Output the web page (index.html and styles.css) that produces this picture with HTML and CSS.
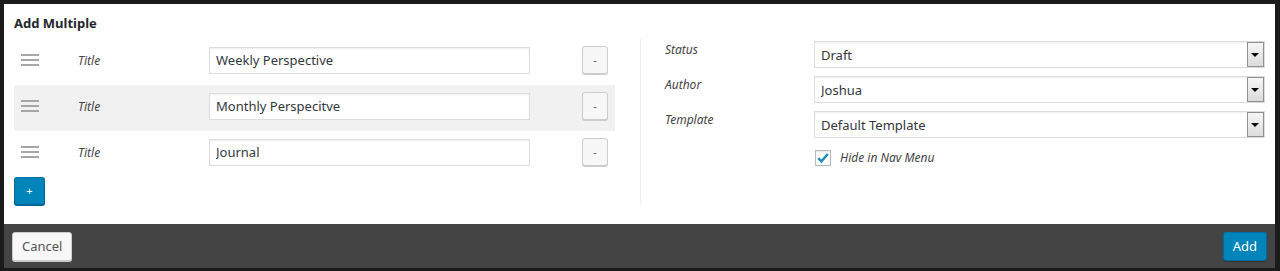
FILE: index.html
```html
<!DOCTYPE html>
<html lang="en">
<head>
    <meta charset="UTF-8">
    <meta name="viewport" content="width=device-width, initial-scale=1.0">
    <title>Add Multiple</title>
    <link rel="stylesheet" href="styles.css">
</head>
<body>
    <div class="modal">
        <div class="modal-body">
            <h1 class="modal-title">Add Multiple</h1>
            <div class="columns">
                <div class="rows-col">
                    <div class="item-row">
                        <span class="handle">
                            <svg width="18" height="12" viewBox="0 0 18 12"><rect y="0" width="18" height="2"/><rect y="5" width="18" height="2"/><rect y="10" width="18" height="2"/></svg>
                        </span>
                        <span class="item-label">Title</span>
                        <input class="text-input" type="text" value="Weekly Perspective">
                        <button class="button button-small">-</button>
                    </div>
                    <div class="item-row item-row-active">
                        <span class="handle">
                            <svg width="18" height="12" viewBox="0 0 18 12"><rect y="0" width="18" height="2"/><rect y="5" width="18" height="2"/><rect y="10" width="18" height="2"/></svg>
                        </span>
                        <span class="item-label">Title</span>
                        <input class="text-input" type="text" value="Monthly Perspecitve">
                        <button class="button button-small">-</button>
                    </div>
                    <div class="item-row">
                        <span class="handle">
                            <svg width="18" height="12" viewBox="0 0 18 12"><rect y="0" width="18" height="2"/><rect y="5" width="18" height="2"/><rect y="10" width="18" height="2"/></svg>
                        </span>
                        <span class="item-label">Title</span>
                        <input class="text-input" type="text" value="Journal">
                        <button class="button button-small">-</button>
                    </div>
                    <button class="button button-primary button-plus">+</button>
                </div>

                <div class="settings-col">
                    <div class="field">
                        <span class="field-label">Status</span>
                        <div class="select-wrap">
                            <select class="select"><option>Draft</option></select>
                        </div>
                    </div>
                    <div class="field">
                        <span class="field-label">Author</span>
                        <div class="select-wrap">
                            <select class="select"><option>Joshua</option></select>
                        </div>
                    </div>
                    <div class="field">
                        <span class="field-label">Template</span>
                        <div class="select-wrap">
                            <select class="select"><option>Default Template</option></select>
                        </div>
                    </div>
                    <div class="field field-check">
                        <span class="field-label"></span>
                        <label class="check">
                            <span class="checkbox">
                                <svg width="14" height="14" viewBox="0 0 14 14"><path d="M2.2 7.2 L5.4 10.4 L11.8 3" fill="none" stroke="#1e8cbe" stroke-width="2.4"/></svg>
                            </span>
                            <span class="check-text">Hide in Nav Menu</span>
                        </label>
                    </div>
                </div>
            </div>
        </div>

        <!-- Footer -->
        <div class="modal-footer">
            <button class="button button-footer">Cancel</button>
            <button class="button button-primary button-footer">Add</button>
        </div>
    </div>
</body>
</html>
```

FILE: styles.css
```css
body {
    margin: 0;
    padding: 4px 5px 3px 4px;
    background-color: #1b1b1b;
    font-family: 'Noto Sans', 'Open Sans', sans-serif;
    color: #32373c;
}
.modal {
    background-color: #fff;
}
.modal-body {
    padding: 10px 10px 19px 10px;
}
.modal-title {
    margin: 0 0 7px 0;
    font-size: 13px;
    line-height: 18px;
    font-weight: bold;
    color: #23282d;
}
.columns {
    display: flex;
}
.rows-col {
    width: 601px;
    margin-right: 25px;
}
.item-row {
    display: flex;
    align-items: center;
    padding: 7px 7px 11px 7px;
}
.item-row-active {
    background-color: #f1f1f1;
}
.handle {
    display: flex;
    width: 18px;
    margin-right: 39px;
}
.handle svg {
    fill: #a6a6a6;
}
.item-label {
    width: 131px;
    font-size: 12px;
    font-style: italic;
    color: #444;
}
.text-input {
    width: 321px;
    height: 27px;
    box-sizing: border-box;
    margin: 0;
    padding: 0 6px;
    border: 1px solid #ddd;
    box-shadow: inset 0 1px 2px rgba(0, 0, 0, 0.07);
    font-family: inherit;
    font-size: 13px;
    color: #32373c;
    background-color: #fff;
    outline: none;
}
.button {
    box-sizing: border-box;
    margin: 0;
    height: 28px;
    padding: 0 9px;
    border: 1px solid #ccc;
    border-radius: 3px;
    background-color: #f7f7f7;
    box-shadow: 0 1px 0 #ccc;
    font-family: inherit;
    font-size: 13px;
    line-height: 26px;
    color: #555;
    cursor: pointer;
}
.button-small {
    width: 26px;
    padding: 0;
    margin-left: auto;
    font-size: 11px;
}
.button-primary {
    background-color: #0085ba;
    border-color: #0073aa #006799 #006799;
    box-shadow: 0 1px 0 #006799;
    color: #fff;
}
.button-plus {
    display: block;
    width: 31px;
    padding: 0;
    font-size: 11px;
}
.settings-col {
    flex: 1;
    border-left: 1px solid #eee;
    padding: 2px 0 0 24px;
}
.field {
    display: flex;
    align-items: flex-start;
    margin-bottom: 8px;
}
.field-label {
    width: 149px;
    flex-shrink: 0;
    font-size: 12px;
    line-height: 18px;
    font-style: italic;
    color: #444;
}
.select-wrap {
    position: relative;
    flex: 1;
}
.select-wrap::after {
    content: '';
    position: absolute;
    top: 1px;
    right: 1px;
    width: 15px;
    height: 23px;
    border: 1px solid #8e8f8f;
    background: linear-gradient(#f6f6f6, #dcdcdc);
    pointer-events: none;
}
.select-wrap::before {
    content: '';
    position: absolute;
    top: 12px;
    right: 6px;
    z-index: 1;
    border-left: 4px solid transparent;
    border-right: 4px solid transparent;
    border-top: 4px solid #000;
    pointer-events: none;
}
.select {
    display: block;
    width: 100%;
    height: 27px;
    box-sizing: border-box;
    margin: 0;
    padding: 0 24px 0 6px;
    border: 1px solid #ddd;
    border-radius: 0;
    -webkit-appearance: none;
    appearance: none;
    background-color: #fff;
    box-shadow: inset 0 1px 2px rgba(0, 0, 0, 0.07);
    font-family: inherit;
    font-size: 13px;
    color: #32373c;
}
.field-check {
    margin-top: 11px;
    margin-bottom: 0;
}
.check {
    display: flex;
    align-items: center;
    margin-left: 1px;
}
.checkbox {
    display: flex;
    align-items: center;
    justify-content: center;
    width: 16px;
    height: 16px;
    box-sizing: border-box;
    border: 1px solid #b4b9be;
    box-shadow: inset 0 1px 2px rgba(0, 0, 0, 0.1);
    margin-right: 9px;
}
.check-text {
    font-size: 12px;
    font-style: italic;
    color: #444;
}
.modal-footer {
    display: flex;
    justify-content: space-between;
    padding: 8px 8px 7px 8px;
    background-color: #444;
}
.button-footer {
    height: 29px;
    line-height: 27px;
    padding: 0 9px;
}
.modal-footer .button-primary {
    box-shadow: 0 1px 0 #333;
}
```
